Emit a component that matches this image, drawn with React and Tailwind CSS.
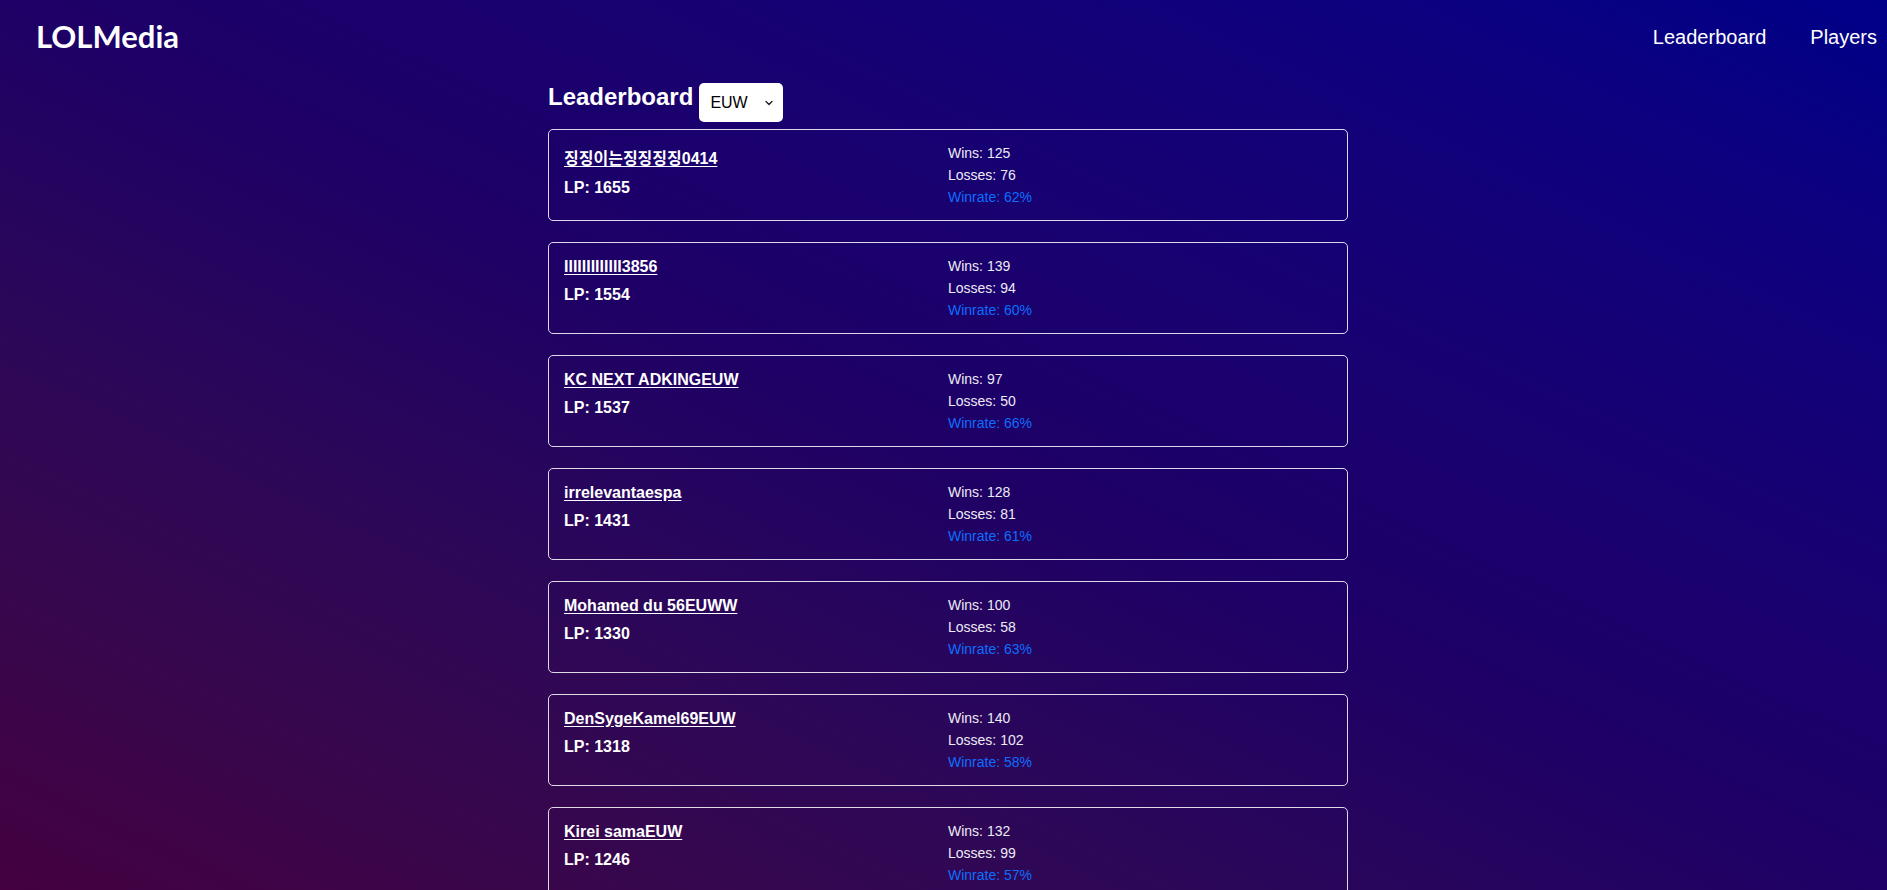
// LOLMedia — leaderboard page

const players = [
  { name: "징징이는징징징징0414", lp: 1655, wins: 125, losses: 76, rate: 62 },
  { name: "IIIIIIIIIIIII3856", lp: 1554, wins: 139, losses: 94, rate: 60 },
  { name: "KC NEXT ADKINGEUW", lp: 1537, wins: 97, losses: 50, rate: 66 },
  { name: "irrelevantaespa", lp: 1431, wins: 128, losses: 81, rate: 61 },
  { name: "Mohamed du 56EUWW", lp: 1330, wins: 100, losses: 58, rate: 63 },
  { name: "DenSygeKamel69EUW", lp: 1318, wins: 140, losses: 102, rate: 58 },
  { name: "Kirei samaEUW", lp: 1246, wins: 132, losses: 99, rate: 57 },
  { name: "Rekkles", lp: 1201, wins: 118, losses: 90, rate: 57 },
];

function PlayerCard({ p }) {
  return (
    <div className="grid grid-cols-2 rounded-[5px] border border-white/85 px-[15px] py-[15px]">
      <div className="text-[16px] font-bold leading-[normal] text-white">
        <div>
          <a href="#" className="underline underline-offset-[2px]">
            {p.name}
          </a>
        </div>
        <div className="mt-[9.5px]">LP: {p.lp}</div>
      </div>
      <div className="flex flex-col gap-[6px] text-[14px] leading-[16px]">
        <div className="text-[#ecebf5]">Wins: {p.wins}</div>
        <div className="text-[#ecebf5]">Losses: {p.losses}</div>
        <div className="text-[#0d6efd]">Winrate: {p.rate}%</div>
      </div>
    </div>
  );
}

function RegionSelect() {
  return (
    <div className="relative h-[39px] w-[84px]">
      <select className="h-full w-full appearance-none rounded-[5px] bg-white pl-[11px] text-[16px] text-black outline-none">
        <option>EUW</option>
        <option>EUNE</option>
        <option>NA</option>
        <option>KR</option>
      </select>
      {/* chevron over the native control */}
      <svg
        className="pointer-events-none absolute right-[10px] top-[17px]"
        width="8"
        height="6"
        viewBox="0 0 8 6"
        fill="none"
      >
        <path d="M1 1.5 L4 4.5 L7 1.5" stroke="#222" strokeWidth="1.4" strokeLinecap="round" strokeLinejoin="round" />
      </svg>
    </div>
  );
}

export default function App() {
  return (
    <div
      className="min-h-screen bg-gradient-to-tr from-[#440040] via-[#1e0066] to-[#000088] bg-fixed text-white"
      style={{ fontFamily: '"Liberation Sans", Arial, "Noto Sans CJK KR", sans-serif' }}
    >
      <header className="flex h-[73px] items-center justify-between pl-[36px] pr-[10px]">
        <div
          className="text-[31px] font-bold leading-none"
          style={{ fontFamily: 'Lato, "Open Sans", sans-serif' }}
        >
          LOLMedia
        </div>
        <nav className="flex gap-[44px] text-[20px]">
          <a href="#">Leaderboard</a>
          <a href="#">Players</a>
        </nav>
      </header>

      <main className="flex justify-center pl-[9px] pt-[10px] pb-[40px]">
        <div className="w-[800px]">
          <div className="flex items-start gap-[6px]">
            <h2 className="text-[24px] font-bold leading-[28px]">Leaderboard</h2>
            <RegionSelect />
          </div>
          <div className="mt-[7px] flex flex-col gap-[21px]">
            {players.map((p) => (
              <PlayerCard key={p.name} p={p} />
            ))}
          </div>
        </div>
      </main>
    </div>
  );
}
